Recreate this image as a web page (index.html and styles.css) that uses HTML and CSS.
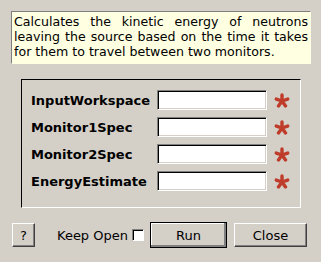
FILE: index.html
```html
<!DOCTYPE html>
<html>
<head>
    <meta charset="utf-8">
    <title>ConvertToEnergy</title>
    <link rel="stylesheet" href="styles.css">
</head>
<body>
    <div class="dialog">
        <div class="desc">Calculates the kinetic energy of neutrons leaving the source based on the time it takes for them to travel between two monitors.</div>

        <div class="group">
            <label class="plabel">InputWorkspace</label>
            <input class="field" type="text">
            <svg class="star" width="16" height="15" viewBox="0 0 16 15"><path d="M8 8 L8 2 M8 8 L13.7 6.1 M8 8 L11.5 12.9 M8 8 L4.5 12.9 M8 8 L2.3 6.1"/></svg>

            <label class="plabel">Monitor1Spec</label>
            <input class="field" type="text">
            <svg class="star" width="16" height="15" viewBox="0 0 16 15"><path d="M8 8 L8 2 M8 8 L13.7 6.1 M8 8 L11.5 12.9 M8 8 L4.5 12.9 M8 8 L2.3 6.1"/></svg>

            <label class="plabel">Monitor2Spec</label>
            <input class="field" type="text">
            <svg class="star" width="16" height="15" viewBox="0 0 16 15"><path d="M8 8 L8 2 M8 8 L13.7 6.1 M8 8 L11.5 12.9 M8 8 L4.5 12.9 M8 8 L2.3 6.1"/></svg>

            <label class="plabel">EnergyEstimate</label>
            <input class="field" type="text">
            <svg class="star" width="16" height="15" viewBox="0 0 16 15"><path d="M8 8 L8 2 M8 8 L13.7 6.1 M8 8 L11.5 12.9 M8 8 L4.5 12.9 M8 8 L2.3 6.1"/></svg>
        </div>

        <div class="footer">
            <button class="btn help">?</button>
            <span class="keep">Keep Open</span>
            <span class="check"></span>
            <button class="btn run">Run</button>
            <button class="btn close">Close</button>
        </div>
    </div>
</body>
</html>
```

FILE: styles.css
```css
/*page*/
html, body {
    margin: 0;
    padding: 0;
}

body {
    width: 321px;
    height: 262px;
    background-color: #d4d0c8;
    font-family: 'DejaVu Sans', sans-serif;
    font-size: 13px;
    color: #000;
    overflow: hidden;
}

.dialog {
    display: flex;
    flex-direction: column;
}

/*description box*/
.desc {
    margin: 11px 0 0 11px;
    width: 294px;
    height: 48px;
    padding: 2px 2px 1px 2px;
    background-color: #ffffe1;
    border-top: 1px solid #7f7f7f;
    border-left: 1px solid #7f7f7f;
    border-right: 1px solid #ffffe1;
    border-bottom: 1px solid #ffffe1;
    font-size: 12.6px;
    line-height: 15px;
    text-align: justify;
}

/*property group*/
.group {
    margin: 15px 0 0 21px;
    width: 269px;
    height: 117px;
    padding: 10px 0 0 9px;
    border-top: 1px solid #000;
    border-left: 1px solid #000;
    border-right: 1px solid #fff;
    border-bottom: 1px solid #fff;
    display: grid;
    grid-template-columns: 120px 110px 22px;
    grid-auto-rows: 20px;
    column-gap: 6px;
    row-gap: 7px;
    align-content: start;
    align-items: center;
}

.plabel {
    font-weight: bold;
    white-space: nowrap;
}

.field {
    box-sizing: border-box;
    width: 110px;
    height: 20px;
    margin: 0;
    padding: 0 2px;
    background: #fff;
    border-top: 1px solid #808080;
    border-left: 1px solid #808080;
    border-right: 1px solid #fff;
    border-bottom: 1px solid #fff;
    box-shadow: inset 1px 1px 0 #000, inset -1px -1px 0 #d4d0c8;
    outline: none;
    font-family: 'DejaVu Sans', sans-serif;
    font-size: 13px;
}

.star {
    margin-left: 1px;
}

.star path {
    fill: none;
    stroke: #bf3b2a;
    stroke-width: 3.4;
    stroke-linecap: round;
}

/*bottom buttons*/
.footer {
    margin-top: 14px;
    display: flex;
    align-items: center;
    height: 26px;
    padding-left: 12px;
}

.btn {
    box-sizing: border-box;
    height: 24px;
    margin: 0;
    padding: 0;
    background-color: #d4d0c8;
    border-top: 1px solid #fff;
    border-left: 1px solid #fff;
    border-right: 1px solid #404040;
    border-bottom: 1px solid #404040;
    box-shadow: inset -1px -1px 0 #808080;
    font-family: 'DejaVu Sans', sans-serif;
    font-size: 13px;
    color: #000;
}

.help {
    width: 23px;
}

.keep {
    margin-left: 22px;
}

.check {
    box-sizing: border-box;
    width: 12px;
    height: 12px;
    margin-left: 4px;
    background: #fff;
    border-top: 1px solid #808080;
    border-left: 1px solid #808080;
    border-right: 1px solid #fff;
    border-bottom: 1px solid #fff;
    box-shadow: inset 1px 1px 0 #000;
}

.run {
    width: 77px;
    height: 26px;
    margin-left: 6px;
    box-shadow: inset -2px -2px 0 #808080, inset 1px 1px 0 #fff;
    border: 1px solid #000;
}

.close {
    width: 73px;
    margin-left: 7px;
}
```
